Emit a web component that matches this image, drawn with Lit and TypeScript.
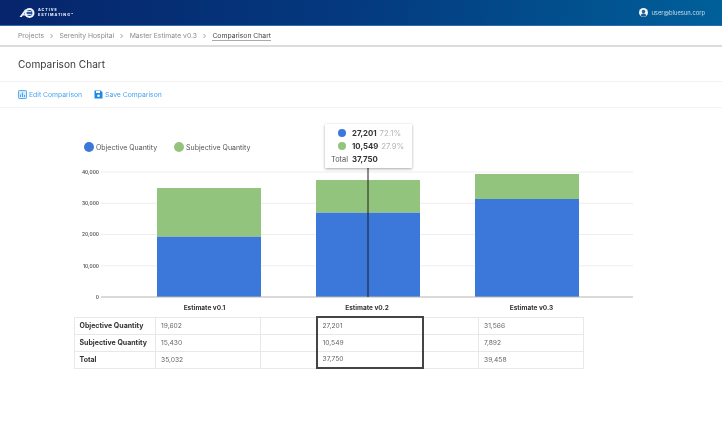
import { LitElement, html, css, svg } from "lit";
import { customElement } from "lit/decorators.js";

const Y0 = 189;
const BLUE = "#3b78d9";
const GREEN = "#93c47d";
const BARS = [
  { x: 157, top: 80, split: 128.7, label: 204.5, name: "Estimate v0.1" },
  { x: 316, top: 72, split: 104.7, label: 367, name: "Estimate v0.2" },
  { x: 475, top: 66, split: 91, label: 531.5, name: "Estimate v0.3" },
];
const TICKS = [
  ["40,000", 64],
  ["30,000", 95.3],
  ["20,000", 126.5],
  ["10,000", 157.8],
] as const;

const ROWS = [
  ["Objective Quantity", "19,602", "27,201", "31,566"],
  ["Subjective Quantity", "15,430", "10,549", "7,892"],
  ["Total", "35,032", "37,750", "39,458"],
];

@customElement("app-root")
export class AppRoot extends LitElement {
  static styles = css`
    :host {
      display: block;
      width: 722px;
      height: 424px;
      overflow: hidden;
      background: #fff;
      font-family: Inter, "Liberation Sans", sans-serif;
      color: #333;
      filter: blur(0.45px);
    }
    .top {
      height: 25px;
      border-bottom: 1px solid #2a6fb5;
      background: linear-gradient(95deg, #06246b 0%, #043a80 50%, #006099 100%);
      display: flex;
      align-items: center;
      justify-content: space-between;
      padding: 0 17px 0 19px;
    }
    .logo { display: flex; align-items: center; gap: 3px; }
    .logo-text {
      color: #e8eefa;
      font-size: 3.7px;
      line-height: 4.4px;
      font-weight: 800;
      letter-spacing: 0.95px;
    }
    .user { display: flex; align-items: center; gap: 3px; color: #c9dcec; font-size: 5.8px; }
    .crumbs {
      height: 19px;
      border-bottom: 2px solid #dcdcdc;
      display: flex;
      align-items: center;
      padding-left: 18px;
      font-size: 6.8px;
      color: #8b8b8b;
    }
    .sep { width: 15.4px; display: flex; justify-content: center; }
    .sep svg { display: block; }
    .cur { color: #444; border-bottom: 1px solid #aaa; line-height: 9px; }
    .title {
      height: 34px;
      border-bottom: 1px solid #f1f1f1;
      display: flex;
      align-items: center;
      padding-left: 18px;
      font-size: 10.1px;
      color: #3a3a3a;
    }
    .actions {
      height: 25px;
      border-bottom: 1px solid #f3f3f3;
      display: flex;
      align-items: center;
      padding-left: 18px;
      gap: 12px;
      font-size: 6.8px;
      color: #4aa3ef;
    }
    .act { display: flex; align-items: center; gap: 2px; }
    .act svg { display: block; }
    .chart { position: relative; height: 208px; }
    .chart svg { display: block; }
    .tip {
      position: absolute;
      left: 325px;
      top: 16px;
      width: 87px;
      height: 44px;
      box-sizing: border-box;
      background: #fff;
      border-radius: 1px;
      box-shadow: 0 1px 3px rgba(0, 0, 0, 0.35);
      display: grid;
      grid-template-columns: 27px auto;
      grid-auto-rows: 13px;
      align-content: center;
      font-size: 7.8px;
    }
    .tip .k { display: flex; justify-content: center; align-items: center; font-size: 7.4px; color: #555; padding-left: 2px; }
    .tip .v { display: flex; align-items: center; gap: 3px; font-weight: 700; color: #333; }
    .tip .pct { font-weight: 400; color: #b5b5b5; }
    .dot { width: 8px; height: 8px; border-radius: 50%; margin-left: 5px; }
    table {
      margin-left: 74px;
      width: 509px;
      table-layout: fixed;
      border-collapse: collapse;
      font-size: 6.7px;
      color: #666;
    }
    td, th {
      height: 16.3px;
      box-sizing: border-box;
      padding: 0 0 0 5px;
      border: 1px solid #e8e8e8;
    }
    tr { height: 17px; }
    th {
      font-weight: 700;
      text-align: left;
      color: #333;
      padding-left: 4.5px;
      font-size: 7px;
    }
    td.hl { border-left: 2px solid #444; border-right: 2px solid #444; }
    tr:first-child td.hl { border-top: 2px solid #444; }
    tr:last-child td.hl { border-bottom: 2px solid #444; }
  `;

  private bars() {
    return BARS.map(
      (b) => svg`
        <rect x=${b.x} y=${b.top} width="104" height=${b.split - b.top} fill=${GREEN}></rect>
        <rect x=${b.x} y=${b.split} width="104" height=${Y0 - b.split} fill=${BLUE}></rect>
        <text x=${b.label} y="201.5" text-anchor="middle" font-size="6.5" font-weight="700" fill="#333">${b.name}</text>
      `,
    );
  }

  private chart() {
    return html`<svg width="722" height="208" viewBox="0 0 722 208" font-family="Inter, 'Liberation Sans', sans-serif">
      <circle cx="89" cy="39" r="5" fill=${BLUE}></circle>
      <text x="96" y="41.5" font-size="7" fill="#555">Objective Quantity</text>
      <circle cx="179" cy="39" r="5" fill=${GREEN}></circle>
      <text x="186" y="41.5" font-size="7" fill="#555">Subjective Quantity</text>
      ${TICKS.map(
        ([t, y]) => svg`
          <line x1="101" x2="633" y1=${y} y2=${y} stroke="#eeeeee" stroke-width="1"></line>
          <text x="99" y=${y + 1.8} text-anchor="end" font-size="4.8" font-weight="600" fill="#555">${t}</text>
        `,
      )}
      ${this.bars()}
      <line x1="101" x2="633" y1=${Y0} y2=${Y0} stroke="#b5b5b5" stroke-width="1"></line>
      <text x="99" y=${Y0 + 1.8} text-anchor="end" font-size="4.8" font-weight="600" fill="#555">0</text>
      <line x1="368" x2="368" y1="60" y2=${Y0} stroke="#1c1c1c" stroke-width="1"></line>
    </svg>`;
  }

  render() {
    const chev = html`<svg width="5" height="6" viewBox="0 0 5 6"><path d="M1.5 1l2 2-2 2" fill="none" stroke="#888" stroke-width="0.8"/></svg>`;
    return html`
      <div class="top">
        <div class="logo">
          <svg width="16" height="12" viewBox="0 0 16 12">
            <path d="M0.5 10L6 2.5h2L4.8 7.2H7v1.4H3.8L2.8 10z" fill="#eef3fb"></path>
            <circle cx="10.5" cy="6" r="5" fill="#eef3fb"></circle>
            <circle cx="10.5" cy="6" r="2.9" fill="#1d4a96"></circle>
            <path d="M6 4.6h6.5M6.5 7.4h6" stroke="#eef3fb" stroke-width="0.9"></path>
          </svg>
          <div class="logo-text">ACTIVE<br />ESTIMATING™</div>
        </div>
        <div class="user">
          <svg width="9" height="9" viewBox="0 0 10 10">
            <circle cx="5" cy="5" r="5" fill="#f1f6fb"></circle>
            <circle cx="5" cy="3.8" r="1.9" fill="#1d5c96"></circle>
            <path d="M1.8 8.2C2.6 6.6 3.8 6.2 5 6.2s2.4.4 3.2 2A4.6 4.6 0 0 1 1.8 8.2z" fill="#1d5c96"></path>
          </svg>
          <span>user@bluesun.corp</span>
        </div>
      </div>
      <nav class="crumbs">
        <span>Projects</span><span class="sep">${chev}</span>
        <span>Serenity Hospital</span><span class="sep">${chev}</span>
        <span>Master Estimate v0.3</span><span class="sep">${chev}</span>
        <span class="cur">Comparison Chart</span>
      </nav>
      <div class="title">Comparison Chart</div>
      <div class="actions">
        <span class="act">
          <svg width="9" height="9" viewBox="0 0 9 9">
            <rect x="0.5" y="0.5" width="8" height="8" rx="0.8" fill="#d6eafb" stroke="#4aa3ef" stroke-width="0.9"></rect>
            <path d="M2.5 7V4.5M4.5 7V2.5M6.5 7V5" stroke="#4aa3ef" stroke-width="1"></path>
          </svg>
          Edit Comparison
        </span>
        <span class="act">
          <svg width="9" height="9" viewBox="0 0 9 9">
            <path d="M0.5 0.5h6.2L8.5 2.3v6.2h-8z" fill="#1f87e5"></path>
            <rect x="2" y="1" width="4" height="2" fill="#fff"></rect>
            <circle cx="4.5" cy="5.8" r="1.3" fill="#fff"></circle>
          </svg>
          Save Comparison
        </span>
      </div>
      <div class="chart">
        ${this.chart()}
        <div class="tip">
          <div class="k"><span class="dot" style="background:${BLUE}"></span></div>
          <div class="v">27,201 <span class="pct">72.1%</span></div>
          <div class="k"><span class="dot" style="background:${GREEN}"></span></div>
          <div class="v">10,549 <span class="pct">27.9%</span></div>
          <div class="k">Total</div>
          <div class="v">37,750</div>
        </div>
      </div>
      <table>
        <colgroup>
          <col style="width:81px" /><col style="width:105px" /><col style="width:56px" />
          <col style="width:106px" /><col style="width:56px" /><col style="width:105px" />
        </colgroup>
        <tbody>
          ${ROWS.map(
            (r) => html`<tr>
              <th>${r[0]}</th>
              <td>${r[1]}</td>
              <td></td>
              <td class="hl">${r[2]}</td>
              <td></td>
              <td>${r[3]}</td>
            </tr>`,
          )}
        </tbody>
      </table>
    `;
  }
}
